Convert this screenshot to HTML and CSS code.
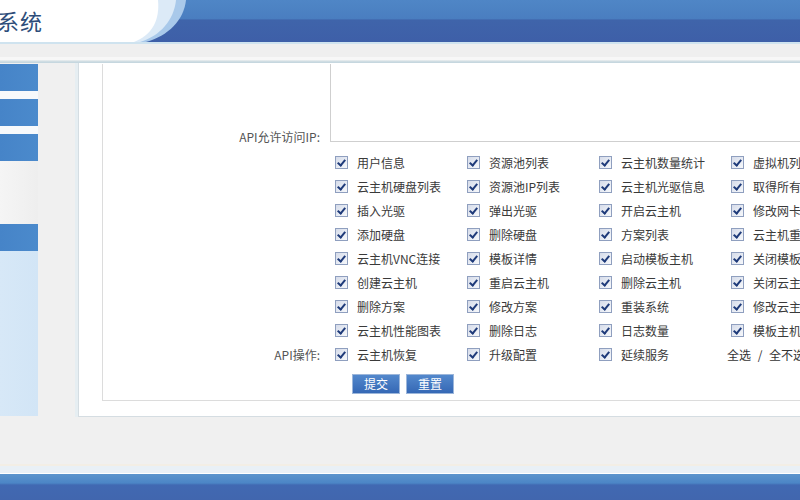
FILE: index.html
```html
<!DOCTYPE html>
<html lang="zh-CN">
<head>
  <meta charset="UTF-8" />
  <title>云主机管理系统</title>
  <link rel="stylesheet" href="styles.css">
</head>
<body>
  <div class="header">
    <svg class="swoosh" width="200" height="42" viewBox="0 0 200 42">
      <path d="M186 0 C184 20 168 36 146 42 H0 V0 Z" fill="#a9c9ea"/>
      <path d="M176 0 C174 20 160 36 140 42 H0 V0 Z" fill="#dceaf7"/>
      <path d="M158 0 C160 20 152 35 134 42 H0 V0 Z" fill="#ffffff"/>
    </svg>
    <h1 class="title">系统</h1>
  </div>
  <div class="subbar"></div>

  <div class="main">
    <div class="sidebar">
      <div class="menu-bar"></div>
      <div class="menu-gap"></div>
      <div class="menu-bar"></div>
      <div class="menu-gap"></div>
      <div class="menu-bar"></div>
      <div class="menu-blank"></div>
      <div class="menu-bar"></div>
      <div class="menu-body"></div>
    </div>

    <div class="panel">
      <div class="form">
        <div class="label ip-label">API允许访问IP:</div>
        <div class="field"><textarea class="ip-box"></textarea></div>

        <div class="label op-label">API操作:</div>
        <div class="field">
          <div class="checks" id="checks"></div>
        </div>

        <div class="label"></div>
        <div class="field actions">
          <button class="btn">提交</button>
          <button class="btn">重置</button>
        </div>
      </div>
    </div>
  </div>

  <div class="footer"></div>

  <script>
    const ops = [
      '用户信息', '资源池列表', '云主机数量统计', '虚拟机列表',
      '云主机硬盘列表', '资源池IP列表', '云主机光驱信息', '取得所有云主机',
      '插入光驱', '弹出光驱', '开启云主机', '修改网卡信息',
      '添加硬盘', '删除硬盘', '方案列表', '云主机重命名',
      '云主机VNC连接', '模板详情', '启动模板主机', '关闭模板主机',
      '创建云主机', '重启云主机', '删除云主机', '关闭云主机',
      '删除方案', '修改方案', '重装系统', '修改云主机密码',
      '云主机性能图表', '删除日志', '日志数量', '模板主机列表',
      '云主机恢复', '升级配置', '延续服务'
    ];

    const box = document.getElementById('checks');
    ops.forEach(name => {
      const item = document.createElement('label');
      item.className = 'item';
      item.innerHTML = '<span class="cb"></span><span>' + name + '</span>';
      box.appendChild(item);
    });
    const all = document.createElement('div');
    all.className = 'select-all';
    all.innerText = '全选 / 全不选';
    box.appendChild(all);
  </script>
</body>
</html>
```

FILE: styles.css
```css
html, body {
  margin: 0;
  padding: 0;
  height: 500px;
  overflow: hidden;
}

body {
  font-family: "Noto Sans CJK SC", "Noto Sans", sans-serif;
  font-size: 12px;
  color: #3a3a3a;
  background: #f0f0f0;
  width: 800px;
}

/* header */
.header {
  position: relative;
  height: 42px;
  background: linear-gradient(to bottom, #4f86c6 0%, #4a7ec0 44%, #3f64aa 48%, #3e5fa8 100%);
  overflow: hidden;
}

.swoosh {
  position: absolute;
  left: 0;
  top: 0;
}

.title {
  position: relative;
  margin: 0 0 0 -3px;
  font-size: 22px;
  font-weight: normal;
  line-height: 40px;
  color: #2d4d7a;
  letter-spacing: 1px;
}

.subbar {
  height: 21px;
  background: linear-gradient(to bottom, #cfe3ef 0, #cfe3ef 2px, #efefef 2px, #efefef 15px, #f7f7f7 15px, #f7f7f7 18px, #eceff0 18px, #c6d7df 20px, #c6d7df 21px);
}

/* main */
.main {
  display: flex;
  align-items: flex-start;
  gap: 40px;
  height: 401px;
  width: 940px;
}

.sidebar {
  width: 38px;
  margin-top: 1px;
  display: flex;
  flex-direction: column;
}

.menu-bar {
  height: 27px;
  background: linear-gradient(to right, #4684c8, #4b8acc);
}

.menu-gap {
  height: 8px;
  background: #f7f9fb;
}

.menu-blank {
  height: 63px;
  background: linear-gradient(to right, #f5f5f5, #eeeeee);
}

.menu-body {
  height: 165px;
  background: linear-gradient(to right, #d7e8f7, #d2e5f6);
}

.panel {
  flex: 1;
  background: #fff;
  border: 1px solid #d5dde2;
  border-top: none;
  box-shadow: -3px 0 0 #e6eef2;
  padding: 0 0 15px 23px;
}

.form {
  display: grid;
  grid-template-columns: 227px 1fr;
  border-left: 1px solid #dcdcdc;
  border-bottom: 1px solid #dcdcdc;
  margin-top: 1px;
}

.label {
  text-align: right;
  padding-right: 10px;
  color: #555;
  line-height: 16px;
}

.ip-label {
  padding-top: 65px;
}

.op-label {
  align-self: end;
  line-height: 24px;
}

.ip-box {
  display: block;
  width: 560px;
  height: 77px;
  margin: 0;
  border: 1px solid #cfcfcf;
  border-top: none;
  resize: none;
  padding: 0;
}

.checks {
  display: grid;
  grid-template-columns: repeat(4, 132px);
  grid-auto-rows: 24.1px;
  padding: 5px 0 0 5px;
}

.item {
  display: flex;
  align-items: center;
  gap: 9px;
  white-space: nowrap;
  overflow: hidden;
}

.cb {
  position: relative;
  flex: none;
  width: 11px;
  height: 11px;
  border: 1px solid #8f9fbf;
  background: linear-gradient(to bottom right, #d6dcea, #f6f8fb);
}

.cb::after {
  content: "";
  position: absolute;
  left: 3px;
  top: 1px;
  width: 3px;
  height: 6px;
  border: solid #1f3b7a;
  border-width: 0 2px 2px 0;
  transform: rotate(40deg);
}

.select-all {
  display: flex;
  align-items: center;
  margin-left: -4px;
  word-spacing: 4px;
  color: #333;
}

.actions {
  display: flex;
  gap: 6px;
  padding: 7px 0 6px 22px;
}

.btn {
  width: 48px;
  height: 20px;
  padding: 0;
  border: 1px solid #9cb6da;
  background: linear-gradient(to bottom, #5388cc, #3568b5);
  color: #fff;
  font-family: "Noto Sans CJK SC", sans-serif;
  font-size: 12px;
  cursor: pointer;
}

/* footer */
.footer {
  height: 36px;
  background: linear-gradient(to bottom, #f3eee5 0, #f3eee5 2px, #e9f0f6 2px, #e9f0f6 9px, #ffffff 9px, #ffffff 10px, #5b94cd 10px, #4c86c6 19px, #4169b2 21px, #4166ae 36px);
}
```
